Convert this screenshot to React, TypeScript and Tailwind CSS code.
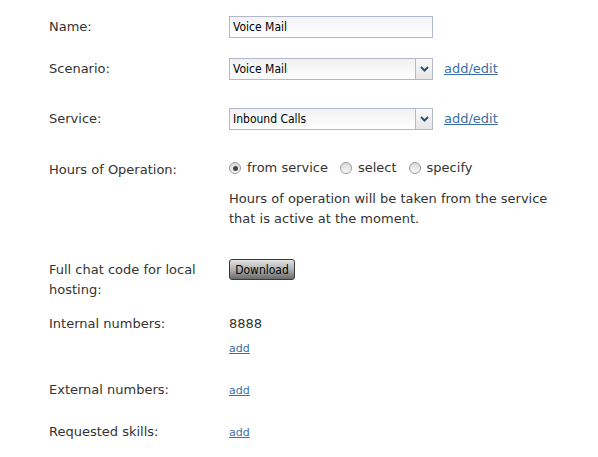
import React from "react";

const sans = "font-['DejaVu_Sans',Verdana,sans-serif]";
const tah = "font-['DejaVu_Sans_Condensed','Liberation_Sans',sans-serif]";

function Label({ children, className = "" }: { children: React.ReactNode; className?: string }) {
  return <div className={`w-[180px] shrink-0 text-[13px] leading-[20px] text-[#333] ${className}`}>{children}</div>;
}

function Select({ value }: { value: string }) {
  return (
    <div className={`flex h-[22px] w-[204px] items-stretch border border-[#b3b8cc] bg-gradient-to-b from-[#f1f1f1] to-white ${tah}`}>
      <div className="flex flex-1 items-center pl-[3px] text-[12px] text-black">{value}</div>
      <div className="flex w-[17px] items-center justify-center border-l border-[#b3b8cc] bg-gradient-to-b from-[#fafafa] to-[#e6e6e6]">
        <svg width="9" height="6" viewBox="0 0 9 6">
          <path d="M1 1 L4.5 4.5 L8 1" stroke="#2d4f80" strokeWidth="2" fill="none" />
        </svg>
      </div>
    </div>
  );
}

function Radio({ checked }: { checked?: boolean }) {
  return (
    <span className="relative inline-flex h-[12px] w-[12px] items-center justify-center rounded-full border border-[#9a9a9a] bg-gradient-to-b from-[#d8d8d8] to-[#fafafa]">
      {checked && <span className="h-[5px] w-[5px] rounded-full bg-[#444]" />}
    </span>
  );
}

export default function App() {
  return (
    <div className={`min-h-[457px] w-[598px] bg-white pl-[49px] ${sans} text-[#333]`}>
      <div className="flex items-center pt-[16px]">
        <Label>Name:</Label>
        <div className={`flex h-[22px] w-[204px] items-center border border-[#b3b8cc] bg-gradient-to-b from-[#f3f3f3] to-white pl-[3px] text-[12px] text-black ${tah}`}>
          Voice Mail
        </div>
      </div>

      <div className="mt-[20px] flex items-center">
        <Label>Scenario:</Label>
        <Select value="Voice Mail" />
        <a className="ml-[11px] text-[13px] text-[#3b6fa6] underline">add/edit</a>
      </div>

      <div className="mt-[28px] flex items-center">
        <Label>Service:</Label>
        <Select value="Inbound Calls" />
        <a className="ml-[11px] text-[13px] text-[#3b6fa6] underline">add/edit</a>
      </div>

      <div className="mt-[28px] flex">
        <Label className="pt-[2px]">Hours of Operation:</Label>
        <div>
          <div className="flex h-[20px] items-center text-[13px]">
            <Radio checked />
            <span className="ml-[6px]">from service</span>
            <span className="ml-[12px]" />
            <Radio />
            <span className="ml-[6px]">select</span>
            <span className="ml-[12px]" />
            <Radio />
            <span className="ml-[6px]">specify</span>
          </div>
          <p className="mt-[11px] w-[340px] text-[13px] leading-[20px]">
            Hours of operation will be taken from the service that is active at the moment.
          </p>
        </div>
      </div>

      <div className="mt-[30px] flex">
        <Label className="pt-[1px]">
          Full chat code for local
          <br />
          hosting:
        </Label>
        <div>
          <button
            className={`flex h-[21px] w-[66px] items-center justify-center rounded-[3px] border border-[#3a3a3a] bg-gradient-to-b from-[#e4e4e4] via-[#b0b0b0] to-[#6a6a6a] text-[12px] text-black ${tah}`}
          >
            Download
          </button>
        </div>
      </div>

      <div className="mt-[14px] flex">
        <Label>Internal numbers:</Label>
        <div>
          <div className="text-[13px] leading-[20px]">8888</div>
          <a className="mt-[7px] block text-[11px] leading-[16px] text-[#3b6fa6] underline">add</a>
        </div>
      </div>

      <div className="mt-[23px] flex items-center">
        <Label>External numbers:</Label>
        <a className="mt-[2px] text-[11px] leading-[16px] text-[#3b6fa6] underline">add</a>
      </div>

      <div className="mt-[22px] flex items-center">
        <Label>Requested skills:</Label>
        <a className="mt-[2px] text-[11px] leading-[16px] text-[#3b6fa6] underline">add</a>
      </div>
    </div>
  );
}
